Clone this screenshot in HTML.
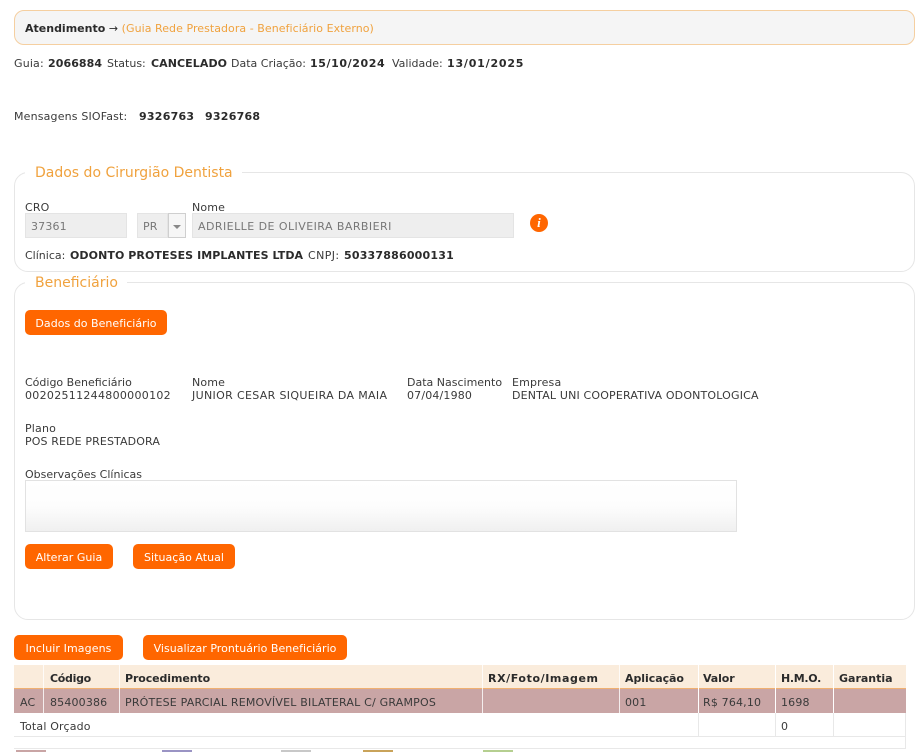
<!DOCTYPE html>
<html><head><meta charset="utf-8">
<style>
html,body{margin:0;padding:0;background:#fff;}
body{width:915px;height:752px;overflow:hidden;position:relative;font-family:"DejaVu Sans","Liberation Sans",sans-serif;font-size:11px;letter-spacing:.17px;color:#3a3a3a;}
.t{position:absolute;white-space:nowrap;line-height:13px;}
b{color:#2b2b2b;font-weight:700;letter-spacing:.08px;}
.box{position:absolute;box-sizing:border-box;}
.fs{border:1px solid #e6e6e6;border-radius:14px;left:14px;width:901px;}
.leg{position:absolute;background:#fff;color:#f0a23e;font-size:14px;letter-spacing:0;line-height:18px;padding:0 9px 0 10px;white-space:nowrap;margin-top:1px;}
.btn{position:absolute;background:#ff6600;color:#fff;border-radius:5px;height:25px;line-height:27px;text-align:center;font-size:11px;letter-spacing:.03px;white-space:nowrap;}
.inp{position:absolute;box-sizing:border-box;background:#eeeeee;border:1px solid #e4e4e4;height:25px;line-height:25px;color:#777;padding-left:5px;white-space:nowrap;}
.sw{position:absolute;top:750px;height:2px;width:30px;}
.h{margin-top:1px;}
.h b{letter-spacing:0;}
.m{letter-spacing:0;}
.u{letter-spacing:.3px;}
</style></head><body>

<div class="box" style="left:14px;top:10px;width:901px;height:35px;background:#f5f5f5;border:1px solid #f5cfa0;border-radius:10px;"></div>
<div class="t" style="left:25px;top:22px;letter-spacing:.05px"><b style="letter-spacing:0">Atendimento</b> <span style="color:#2b2b2b">→</span> <span style="color:#f0a23e">(Guia Rede Prestadora - Beneficiário Externo)</span></div>

<div class="t" style="left:14px;top:57px;">Guia:</div>
<div class="t" style="left:48px;top:57px;"><b>2066884</b></div>
<div class="t m" style="left:107px;top:57px;">Status:</div>
<div class="t" style="left:151px;top:57px;"><b>CANCELADO</b></div>
<div class="t m" style="left:231px;top:57px;">Data Criação:</div>
<div class="t" style="left:310px;top:57px;"><b style="letter-spacing:.6px">15/10/2024</b></div>
<div class="t m" style="left:392px;top:57px;">Validade:</div>
<div class="t" style="left:447px;top:57px;"><b style="letter-spacing:.8px">13/01/2025</b></div>

<div class="t" style="left:14px;top:110px;">Mensagens SIOFast:</div>
<div class="t" style="left:139px;top:110px;"><b style="letter-spacing:.25px">9326763</b></div>
<div class="t" style="left:205px;top:110px;"><b style="letter-spacing:.25px">9326768</b></div>

<div class="box fs" style="top:172px;height:100px;"></div>
<div class="leg" style="left:25px;top:163px;">Dados do Cirurgião Dentista</div>
<div class="t" style="left:25px;top:201px;">CRO</div>
<div class="t" style="left:192px;top:201px;">Nome</div>
<div class="inp" style="left:25px;top:213px;width:102px;">37361</div>
<div class="inp" style="left:137px;top:213px;width:31px;">PR</div>
<div class="box" style="left:168px;top:213px;width:18px;height:25px;border:1px solid #cfcfcf;background:#f6f6f6;"></div>
<div class="box" style="left:173px;top:225px;width:0;height:0;border-left:4px solid transparent;border-right:4px solid transparent;border-top:4px solid #888;"></div>
<div class="inp" style="left:192px;top:213px;width:322px;letter-spacing:.45px;">ADRIELLE DE OLIVEIRA BARBIERI</div>
<div class="box" style="left:530px;top:214px;width:18px;height:18px;border-radius:50%;background:#ff6600;color:#fff;font:italic 700 13px/18px 'Liberation Serif',serif;text-align:center;">i</div>
<div class="t m" style="left:25px;top:249px;">Clínica:</div>
<div class="t" style="left:70px;top:249px;"><b>ODONTO PROTESES IMPLANTES LTDA</b></div>
<div class="t" style="left:308px;top:249px;letter-spacing:.4px;">CNPJ:</div>
<div class="t" style="left:344px;top:249px;"><b style="letter-spacing:.2px">50337886000131</b></div>

<div class="box fs" style="top:282px;height:338px;"></div>
<div class="leg" style="left:25px;top:273px;">Beneficiário</div>
<div class="btn" style="left:25px;top:310px;width:142px;">Dados do Beneficiário</div>

<div class="t m" style="left:25px;top:376px;">Código Beneficiário</div>
<div class="t u" style="left:25px;top:389px;">00202511244800000102</div>
<div class="t" style="left:192px;top:376px;">Nome</div>
<div class="t u" style="left:192px;top:389px;letter-spacing:.34px">JUNIOR CESAR SIQUEIRA DA MAIA</div>
<div class="t m" style="left:407px;top:376px;">Data Nascimento</div>
<div class="t" style="left:407px;top:389px;">07/04/1980</div>
<div class="t" style="left:512px;top:376px;">Empresa</div>
<div class="t" style="left:512px;top:389px;">DENTAL UNI COOPERATIVA ODONTOLOGICA</div>
<div class="t" style="left:25px;top:422px;">Plano</div>
<div class="t" style="left:25px;top:435px;letter-spacing:.12px">POS REDE PRESTADORA</div>
<div class="t m" style="left:25px;top:468px;">Observações Clínicas</div>
<div class="box" style="left:25px;top:480px;width:712px;height:52px;border:1px solid #e2e2e2;background:linear-gradient(#ffffff 0%,#fdfdfd 50%,#f0f0f0 100%);"></div>

<div class="btn" style="left:25px;top:544px;width:88px;">Alterar Guia</div>
<div class="btn" style="left:133px;top:544px;width:102px;">Situação Atual</div>

<div class="btn" style="left:14px;top:635px;width:109px;letter-spacing:.1px">Incluir Imagens</div>
<div class="btn" style="left:143px;top:635px;width:204px;">Visualizar Prontuário Beneficiário</div>

<!-- table -->
<div class="box" style="left:14px;top:665px;width:892px;height:24px;background:#faecdc;border-bottom:1px solid #f0b070;"></div>
<div class="box" style="left:14px;top:689px;width:892px;height:24px;background:#c9a5a5;"></div>
<div class="box" style="left:14px;top:713px;width:892px;height:24px;border-bottom:1px solid #e8e8e8;border-right:1px solid #e8e8e8;"></div>
<div class="box" style="left:14px;top:737px;width:892px;height:12px;border-bottom:1px solid #e8e8e8;border-right:1px solid #e8e8e8;"></div>

<div class="box" style="left:43px;top:665px;width:1px;height:48px;background:#fff;opacity:.8;"></div>
<div class="box" style="left:119px;top:665px;width:1px;height:48px;background:#fff;opacity:.8;"></div>
<div class="box" style="left:482px;top:665px;width:1px;height:48px;background:#fff;opacity:.8;"></div>
<div class="box" style="left:619px;top:665px;width:1px;height:48px;background:#fff;opacity:.8;"></div>
<div class="box" style="left:698px;top:665px;width:1px;height:72px;background:#fff;"></div>
<div class="box" style="left:775px;top:665px;width:1px;height:72px;background:#fff;"></div>
<div class="box" style="left:833px;top:665px;width:1px;height:72px;background:#fff;"></div>
<div class="box" style="left:698px;top:713px;width:1px;height:24px;background:#e8e8e8;"></div>
<div class="box" style="left:775px;top:713px;width:1px;height:24px;background:#e8e8e8;"></div>
<div class="box" style="left:833px;top:713px;width:1px;height:24px;background:#e8e8e8;"></div>

<div class="t h" style="left:50px;top:671px;"><b style="letter-spacing:-.3px">Código</b></div>
<div class="t h" style="left:125px;top:671px;"><b style="letter-spacing:-.1px">Procedimento</b></div>
<div class="t h" style="left:488px;top:671px;"><b style="letter-spacing:.6px">RX/Foto/Imagem</b></div>
<div class="t h" style="left:625px;top:671px;"><b style="letter-spacing:-.05px">Aplicação</b></div>
<div class="t h" style="left:703px;top:671px;"><b style="letter-spacing:-.1px">Valor</b></div>
<div class="t h" style="left:781px;top:671px;"><b style="letter-spacing:-.3px">H.M.O.</b></div>
<div class="t h" style="left:839px;top:671px;"><b>Garantia</b></div>

<div class="t" style="left:20px;top:696px;">AC</div>
<div class="t" style="left:50px;top:696px;">85400386</div>
<div class="t" style="left:125px;top:696px;letter-spacing:.2px">PRÓTESE PARCIAL REMOVÍVEL BILATERAL C/ GRAMPOS</div>
<div class="t" style="left:625px;top:696px;">001</div>
<div class="t" style="left:703px;top:696px;">R$ 764,10</div>
<div class="t" style="left:781px;top:696px;">1698</div>

<div class="t" style="left:20px;top:720px;">Total Orçado</div>
<div class="t" style="left:781px;top:720px;">0</div>

<div class="sw" style="left:16px;background:#c9a5a5;"></div>
<div class="sw" style="left:162px;background:#9a94c4;"></div>
<div class="sw" style="left:281px;background:#c8c8c8;"></div>
<div class="sw" style="left:363px;background:#c9a35a;"></div>
<div class="sw" style="left:483px;background:#b5cf90;"></div>

</body></html>
